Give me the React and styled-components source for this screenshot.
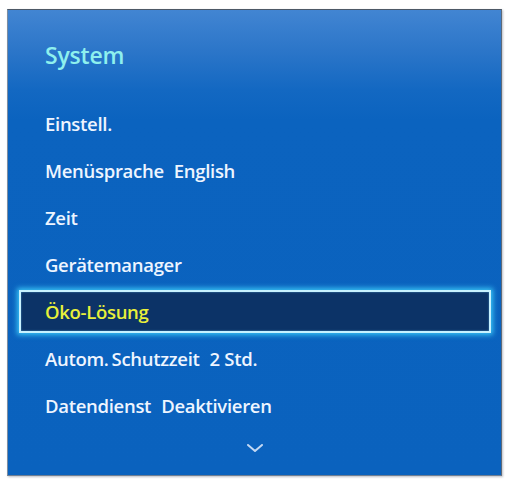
import React from "react";
import styled, { createGlobalStyle } from "styled-components";

const Global = createGlobalStyle`
  html, body { margin: 0; padding: 0; background: #ffffff; }
  body { width: 507px; height: 479px; overflow: hidden; }
`;

const Page = styled.div`
  padding: 9px 5px 3px 7px;
`;

const Panel = styled.div`
  width: 495px;
  height: 467px;
  box-sizing: border-box;
  border: 1px solid #7d8da0;
  border-top-color: #4d5866;
  border-right-color: #5e6a78;
  border-bottom-color: #6f7f93;
  background: linear-gradient(
    180deg,
    #4285d2 0px,
    #2c76c9 40px,
    #1368c2 80px,
    #0b63bf 110px,
    #0a62be 100%
  );
  display: flex;
  flex-direction: column;
  font-family: "Open Sans", "DejaVu Sans", sans-serif;
  box-shadow: 1px 1px 2px rgba(60, 70, 90, 0.35);
`;

const Title = styled.div`
  height: 90px;
  box-sizing: border-box;
  padding: 31px 0 0 37px;
  font-size: 23px;
  line-height: 28px;
  font-weight: 600;
  color: #8ef0ee;
  letter-spacing: -0.2px;
`;

const List = styled.div`
  display: flex;
  flex-direction: column;
`;

const Row = styled.div`
  height: 47px;
  box-sizing: border-box;
  padding: ${(p) => (p.$selected ? "2px 10px 2px 11px" : "0 0 0 37px")};
  font-size: 18.5px;
  line-height: 47px;
  font-weight: 600;
  color: #eef5ff;
  letter-spacing: -0.3px;
  white-space: nowrap;
`;

const Highlight = styled.div`
  height: 43px;
  box-sizing: border-box;
  border: 2px solid #c8f2ff;
  background: #0c3367;
  padding-left: 24px;
  line-height: 39px;
  color: #e9f03a;
  box-shadow: 0 0 5px 2px #39c2f4, inset 0 0 2px rgba(120, 210, 255, 0.6);
`;

const Gap = styled.span`
  display: inline-block;
  width: ${(p) => p.$w}px;
`;

const Footer = styled.div`
  flex: 1;
  display: flex;
  justify-content: center;
  padding-top: 15px;
`;

const Chevron = () => (
  <svg width="16" height="8" viewBox="0 0 16 8">
    <polyline
      points="1,1 8,7 15,1"
      fill="none"
      stroke="#c2d8f3"
      strokeWidth="2"
      strokeLinecap="round"
      strokeLinejoin="round"
    />
  </svg>
);

const items = [
  { parts: ["Einstell."] },
  { parts: ["Menüsprache", 10, "English"] },
  { parts: ["Zeit"] },
  { parts: ["Gerätemanager"] },
  { parts: ["Öko-Lösung"], selected: true },
  { parts: ["Autom.", 3, "Schutzzeit", 10, "2 Std."] },
  { parts: ["Datendienst", 10, "Deaktivieren"] },
];

const Label = ({ parts }) => (
  <>
    {parts.map((p, i) =>
      typeof p === "number" ? <Gap key={i} $w={p} /> : <span key={i}>{p}</span>
    )}
  </>
);

export default function App() {
  return (
    <>
      <Global />
      <Page>
        <Panel>
          <Title>System</Title>
          <List>
            {items.map((it, i) =>
              it.selected ? (
                <Row key={i} $selected>
                  <Highlight>
                    <Label parts={it.parts} />
                  </Highlight>
                </Row>
              ) : (
                <Row key={i}>
                  <Label parts={it.parts} />
                </Row>
              )
            )}
          </List>
          <Footer>
            <Chevron />
          </Footer>
        </Panel>
      </Page>
    </>
  );
}
